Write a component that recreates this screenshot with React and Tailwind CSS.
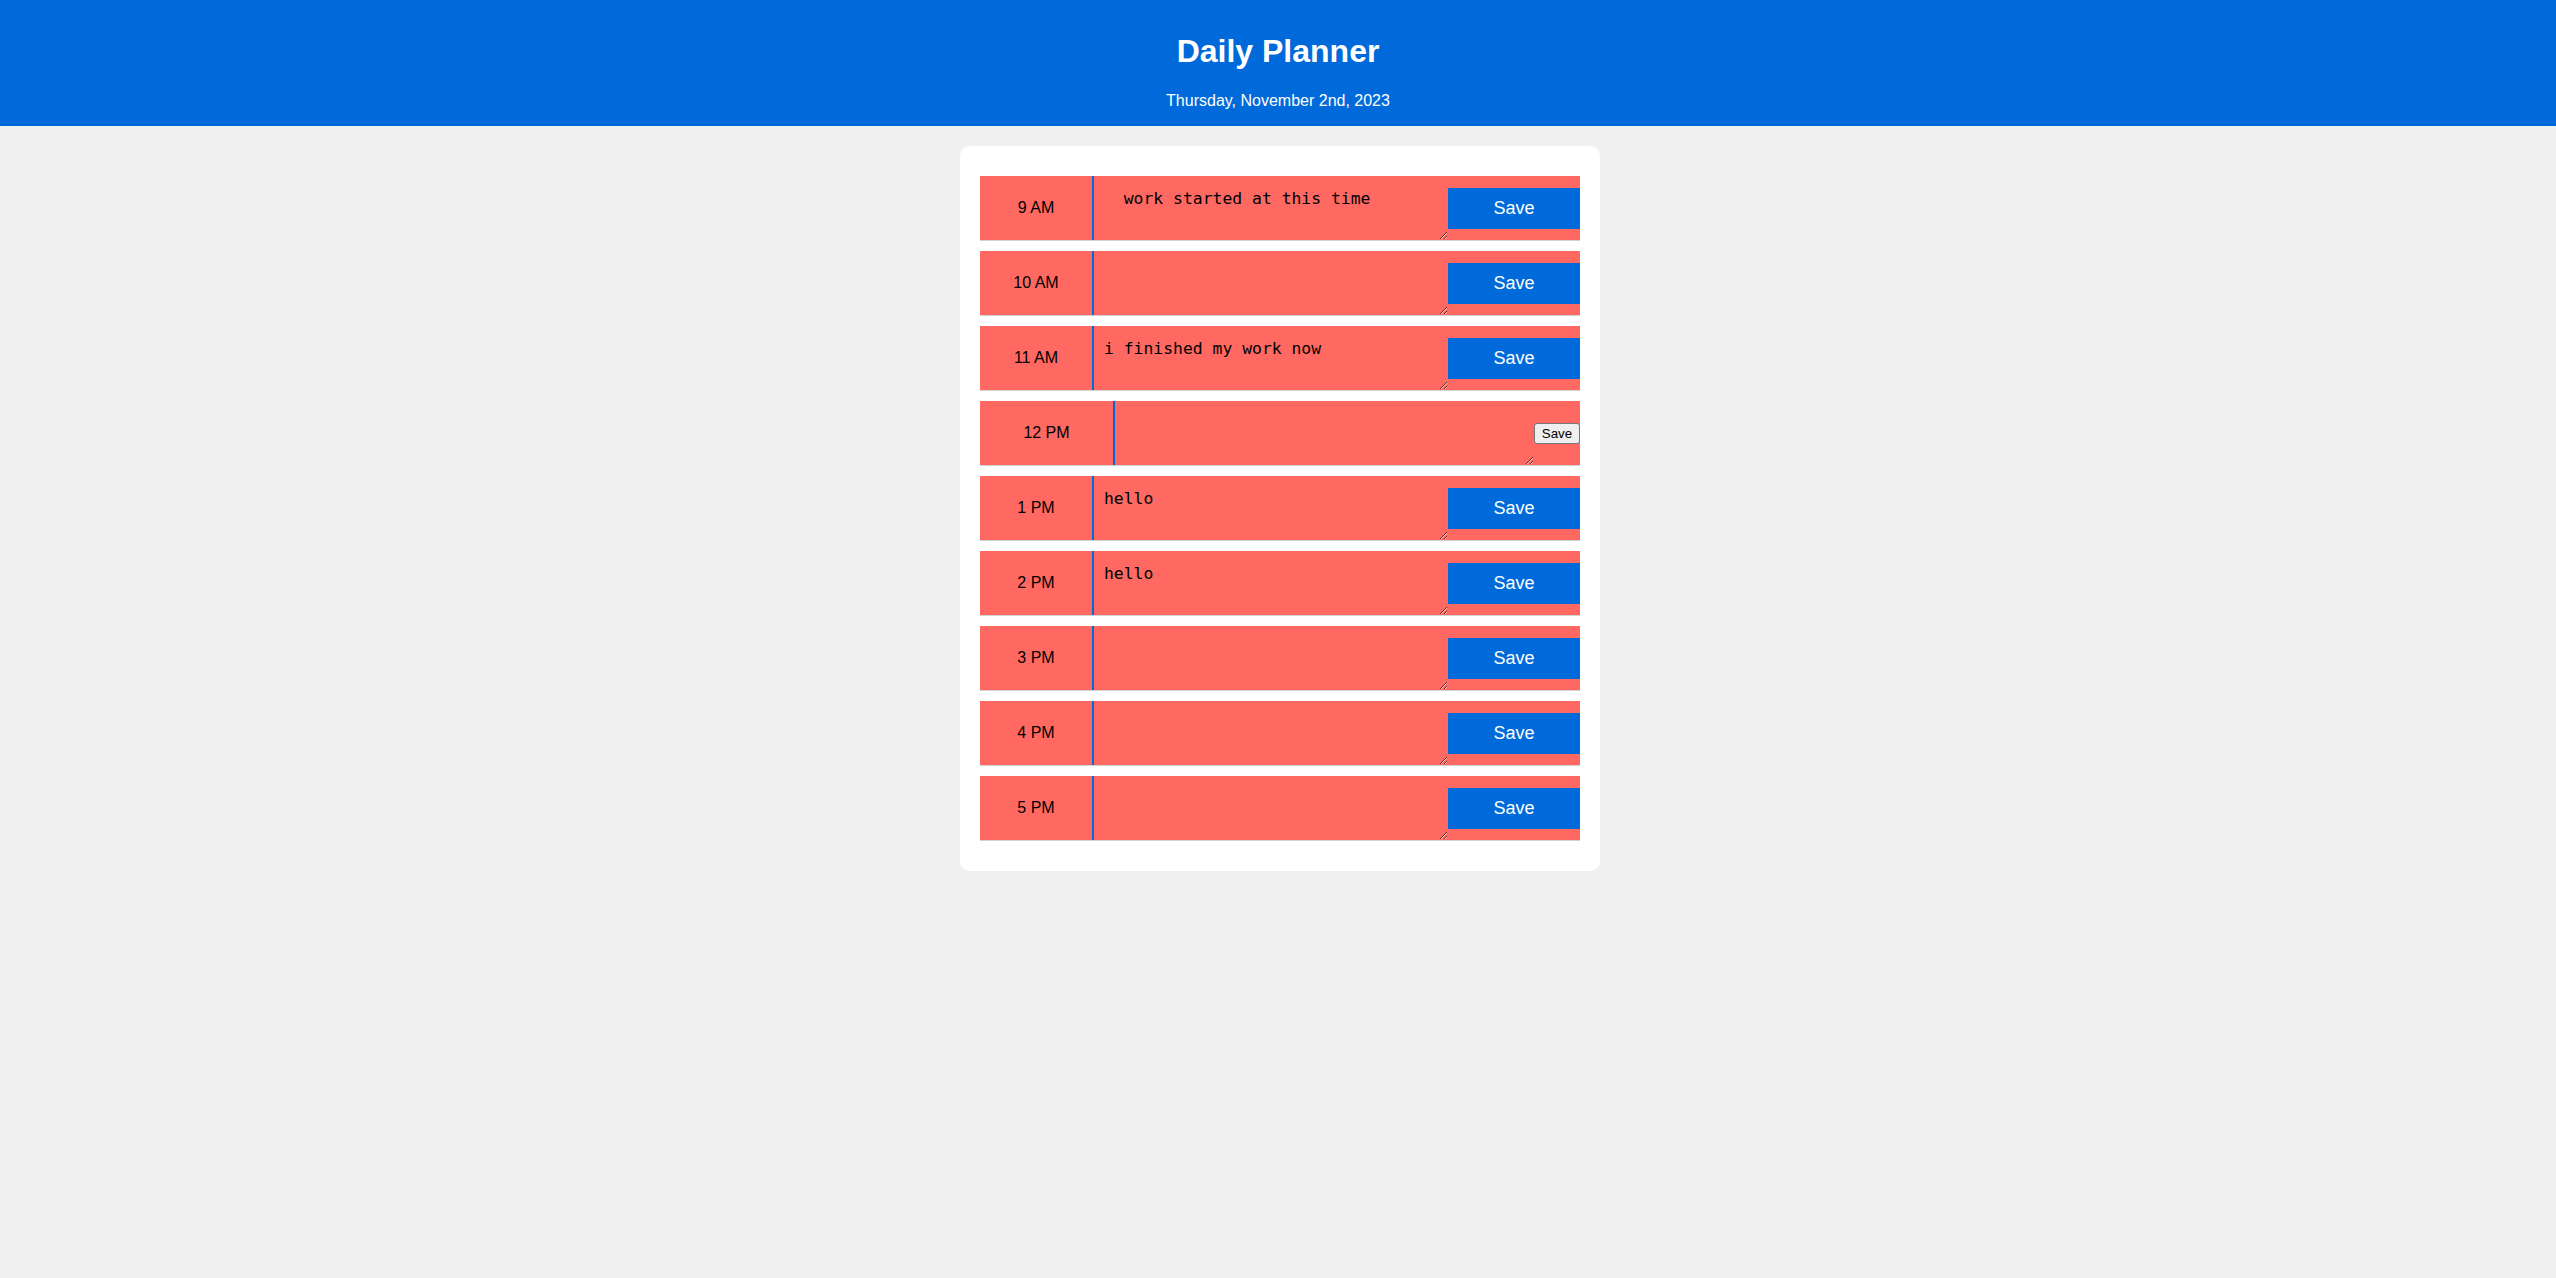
import { useState } from "react";

const initialHours = [
  { id: "9", label: "9 AM", text: "  work started at this time" },
  { id: "10", label: "10 AM", text: "" },
  { id: "11", label: "11 AM", text: "i finished my work now" },
  { id: "12", label: "12 PM", text: "", plain: true },
  { id: "13", label: "1 PM", text: "hello" },
  { id: "14", label: "2 PM", text: "hello" },
  { id: "15", label: "3 PM", text: "" },
  { id: "16", label: "4 PM", text: "" },
  { id: "17", label: "5 PM", text: "" },
];

function HourRow({ hour, onChange }) {
  // the 12 PM row renders with an unstyled button and a wider hour cell
  const hourClass = hour.plain ? "w-[133px]" : "w-[112px]";
  const btnClass = hour.plain
    ? "h-[21px] w-[46px] rounded-[3px] border border-[#767676] bg-[#efefef] text-[13.33px] text-black"
    : "h-[41px] w-[132px] bg-[#006adb] text-[18px] text-white";

  return (
    <div className="flex h-[65px] border-b border-[#d3d3d3] bg-[#ff6961]">
      <div className={`${hourClass} flex shrink-0 items-center justify-center text-[16px] text-black`}>{hour.label}</div>
      <textarea
        value={hour.text}
        onChange={(e) => onChange(hour.id, e.target.value)}
        className="h-full min-w-0 flex-1 border-0 border-l-2 border-[#006adb] bg-transparent pl-[10px] pr-[4px] pt-[11px] font-['DejaVu_Sans_Mono',monospace] text-[16.4px] leading-normal text-black outline-none"
      />
      <button type="button" className={`${btnClass} shrink-0 self-center`}>
        Save
      </button>
    </div>
  );
}

export default function App() {
  const [hours, setHours] = useState(initialHours);

  const handleChange = (id, value) => {
    setHours((prev) => prev.map((h) => (h.id === id ? { ...h, text: value } : h)));
  };

  return (
    <main className="min-h-screen bg-[#f0f0f0] font-['Liberation_Sans',Arial,sans-serif]">
      <header className="bg-[#006adb] pb-[16px] pt-[33px] text-center text-white">
        <h1 className="text-[32px] font-bold leading-[37px]">Daily Planner</h1>
        <p className="mt-[22px] text-[16px] leading-[18px]">Thursday, November 2nd, 2023</p>
      </header>

      <div className="flex justify-center pl-[4px] pt-[20px]">
        <section className="flex w-[640px] flex-col gap-[10px] rounded-[10px] bg-white px-[20px] py-[30px]">
          {hours.map((h) => (
            <HourRow key={h.id} hour={h} onChange={handleChange} />
          ))}
        </section>
      </div>
    </main>
  );
}
